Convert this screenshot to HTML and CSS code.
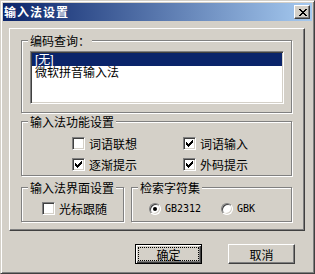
FILE: index.html
```html
<!DOCTYPE html>
<html>
<head>
<meta charset="utf-8">
<link rel="stylesheet" href="styles.css">
</head>
<body>
<div class="window">
  <div class="titlebar">
    <span class="title">输入法设置</span>
    <span class="close"><svg width="8" height="7" viewBox="0 0 8 7" shape-rendering="crispEdges"><path fill="#000" d="M0 0h2v1H0zM6 0h2v1H6zM1 1h2v1H1zM5 1h2v1H5zM2 2h4v1H2zM3 3h2v1H3zM2 4h4v1H2zM1 5h2v1H1zM5 5h2v1H5zM0 6h2v1H0zM6 6h2v1H6z"/></svg></span>
  </div>
  <div class="panel">
    <fieldset class="group">
      <legend>编码查询：</legend>
      <div class="body body-code">
        <div class="listbox">
          <div class="item selected">[无]</div>
          <div class="item">微软拼音输入法</div>
        </div>
      </div>
    </fieldset>
    <fieldset class="group group-func">
      <legend>输入法功能设置</legend>
      <div class="body body-func">
        <div class="check"><span class="box"></span><span>词语联想</span></div>
        <div class="check"><span class="box"><svg width="7" height="7" viewBox="0 0 7 7" shape-rendering="crispEdges"><path fill="#000" d="M6 0h1v1H6zM5 1h2v1H5zM0 2h1v1H0zM4 2h3v1H4zM0 3h2v1H0zM3 3h3v1H3zM0 4h5v1H0zM1 5h3v1H1zM2 6h1v1H2z"/></svg></span><span>词语输入</span></div>
        <div class="check"><span class="box"><svg width="7" height="7" viewBox="0 0 7 7" shape-rendering="crispEdges"><path fill="#000" d="M6 0h1v1H6zM5 1h2v1H5zM0 2h1v1H0zM4 2h3v1H4zM0 3h2v1H0zM3 3h3v1H3zM0 4h5v1H0zM1 5h3v1H1zM2 6h1v1H2z"/></svg></span><span>逐渐提示</span></div>
        <div class="check"><span class="box"><svg width="7" height="7" viewBox="0 0 7 7" shape-rendering="crispEdges"><path fill="#000" d="M6 0h1v1H6zM5 1h2v1H5zM0 2h1v1H0zM4 2h3v1H4zM0 3h2v1H0zM3 3h3v1H3zM0 4h5v1H0zM1 5h3v1H1zM2 6h1v1H2z"/></svg></span><span>外码提示</span></div>
      </div>
    </fieldset>
    <div class="row">
      <fieldset class="group group-ui">
        <legend>输入法界面设置</legend>
        <div class="body body-ui">
          <div class="check"><span class="box"></span><span>光标跟随</span></div>
        </div>
      </fieldset>
      <fieldset class="group group-charset">
        <legend>检索字符集</legend>
        <div class="body body-charset">
          <div class="radio"><span class="dot on"></span><span class="latin">GB2312</span></div>
          <div class="radio"><span class="dot"></span><span class="latin">GBK</span></div>
        </div>
      </fieldset>
    </div>
  </div>
  <div class="buttons">
    <div class="btn default"><span class="focus">确定</span></div>
    <div class="btn">取消</div>
  </div>
</div>
</body>
</html>
```

FILE: styles.css
```css
* { box-sizing: border-box; }
html, body { margin: 0; padding: 0; background: #d4d0c8; }
body {
  font-family: "Noto Sans CJK SC", "Liberation Sans", sans-serif;
  font-size: 12px;
  color: #000;
}
.window {
  width: 315px;
  height: 274px;
  background: #d4d0c8;
  border: 1px solid;
  border-color: #d4d0c8 #404040 #404040 #d4d0c8;
  box-shadow: inset 1px 1px #fff, inset -1px -1px #808080;
  padding: 2px;
}
.titlebar {
  height: 18px;
  background: linear-gradient(to right, #0a246a, #a6caf0);
  display: flex;
  align-items: center;
  justify-content: space-between;
  padding: 0 2px 0 1px;
}
.title {
  color: #fff;
  font-weight: bold;
  font-size: 12px;
  line-height: 14px;
  letter-spacing: 1px;
}
.close {
  width: 16px;
  height: 14px;
  background: #d4d0c8;
  border: 1px solid;
  border-color: #fff #404040 #404040 #fff;
  box-shadow: inset -1px -1px #808080;
  display: flex;
  align-items: center;
  justify-content: center;
  padding-left: 1px;
}
.close svg { display: block; }
.panel {
  margin: 7px 7px 0 6px;
  border: 1px solid;
  border-color: #fff #404040 #404040 #fff;
  box-shadow: inset -1px -1px #808080;
  padding: 5px 12px 8px 11px;
}
.group {
  margin: 0;
  padding: 0;
  min-width: 0;
  border: 1px solid #808080;
  box-shadow: inset 1px 1px #fff, 1px 1px #fff;
}
.group legend {
  margin-left: 6px;
  padding: 0 2px;
  height: 13px;
  line-height: 13px;
  font-size: 12px;
  background: #d4d0c8;
}
.body-code { padding: 4px 7px 8px 8px; }
.listbox {
  height: 53px;
  background: #fff;
  border: 1px solid;
  border-color: #808080 #fff #fff #808080;
  box-shadow: inset 1px 1px #404040, inset -1px -1px #d4d0c8;
  padding: 1px;
}
.item {
  height: 13px;
  padding: 1px 0 0 3px;
  line-height: 12px;
  font-family: "Liberation Sans", "Noto Sans CJK SC", sans-serif;
  white-space: nowrap;
}
.item.selected { background: #0a246a; color: #fff; }
.group-func { margin-top: 2px; }
.body-func {
  display: grid;
  grid-template-columns: 111px auto;
  row-gap: 8px;
  padding: 9px 0 4px 50px;
}
.check, .radio {
  display: flex;
  align-items: center;
  height: 13px;
  line-height: 13px;
  white-space: nowrap;
}
.box {
  width: 13px;
  height: 13px;
  margin-right: 4px;
  background: #fff;
  border: 1px solid;
  border-color: #808080 #fff #fff #808080;
  box-shadow: inset 1px 1px #404040, inset -1px -1px #d4d0c8;
  display: flex;
  align-items: center;
  justify-content: center;
  flex: none;
}
.box svg { display: block; }
.row {
  display: flex;
  gap: 7px;
  margin-top: 5px;
}
.group-ui { width: 103px; flex: none; }
.group-charset { flex: 1; }
.body-ui { padding: 8px 0 6px 20px; }
.body-charset {
  display: grid;
  grid-template-columns: 72px auto;
  padding: 8px 0 6px 17px;
}
.dot {
  width: 12px;
  height: 12px;
  margin-right: 4px;
  border-radius: 50%;
  background: #fff;
  border: 1px solid;
  border-color: #808080 #fff #fff #808080;
  box-shadow: inset 1px 1px #404040, inset -1px -1px #d4d0c8;
  display: flex;
  align-items: center;
  justify-content: center;
  flex: none;
}
.dot.on::after {
  content: "";
  width: 4px;
  height: 4px;
  border-radius: 50%;
  background: #000;
}
.latin {
  font-family: "DejaVu Sans Mono", "Liberation Mono", monospace;
  font-size: 10px;
}
.buttons {
  display: flex;
  gap: 26px;
  margin: 13px 0 0 132px;
}
.btn {
  width: 67px;
  height: 20px;
  border: 1px solid;
  border-color: #fff #404040 #404040 #fff;
  box-shadow: inset -1px -1px #808080;
  display: flex;
  align-items: center;
  justify-content: center;
  line-height: 13px;
}
.btn.default {
  border: 1px solid #000;
  box-shadow: inset 1px 1px #fff, inset -1px -1px #404040, inset -2px -2px #808080;
  padding: 2px;
}
.focus {
  flex: 1;
  align-self: stretch;
  border: 1px dotted #000;
  display: flex;
  align-items: center;
  justify-content: center;
}
```
